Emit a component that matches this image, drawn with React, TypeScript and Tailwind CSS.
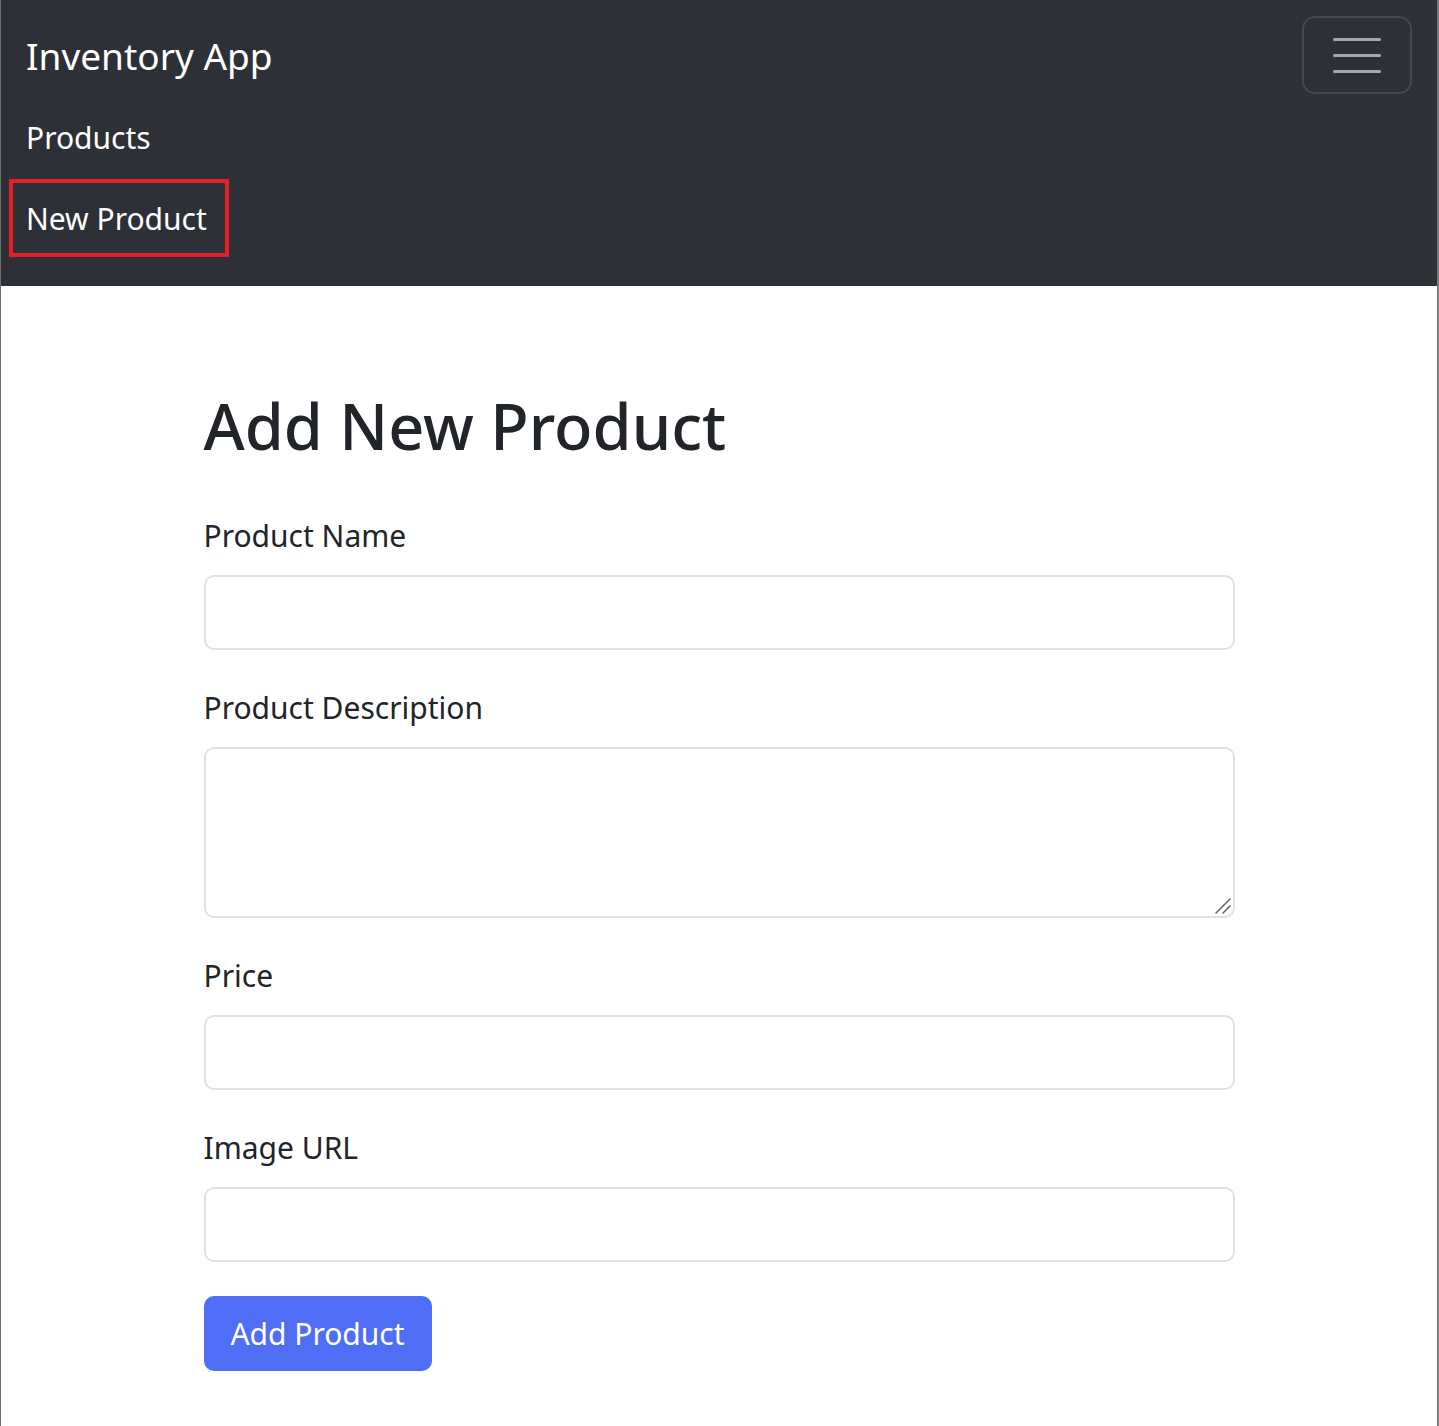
import React from "react";

const fields = [
  { id: "name", label: "Product Name", kind: "input" },
  { id: "description", label: "Product Description", kind: "textarea" },
  { id: "price", label: "Price", kind: "input" },
  { id: "image", label: "Image URL", kind: "input" },
];

function Navbar() {
  return (
    <nav className="bg-[#2d3036] px-[25px] pt-[16px] pb-[29px]">
      <div className="flex h-[78px] items-center justify-between">
        <a href="#" className="text-[37px] leading-none text-white">
          Inventory App
        </a>
        <button
          type="button"
          aria-label="Toggle navigation"
          className="flex h-[78px] w-[110px] flex-col items-center justify-center gap-[13px] rounded-[13px] border-2 border-[#45484d]"
        >
          <span className="block h-[3px] w-[48px] rounded-full bg-[#a6a7a9]" />
          <span className="block h-[3px] w-[48px] rounded-full bg-[#a6a7a9]" />
          <span className="block h-[3px] w-[48px] rounded-full bg-[#a6a7a9]" />
        </button>
      </div>
      <ul className="mt-[3px]">
        <li className="flex h-[80px] items-center">
          <a href="#" className="text-[30px] text-white">
            Products
          </a>
        </li>
        <li className="flex h-[80px] items-center">
          <a
            href="#"
            className="-ml-[17px] mt-[2px] flex h-[78px] w-[220px] items-center border-4 border-[#ec1c24] pl-[13px] text-[30px] text-white"
          >
            New Product
          </a>
        </li>
      </ul>
    </nav>
  );
}

function ResizeGrip() {
  return (
    <svg
      className="pointer-events-none absolute right-[3px] bottom-[3px]"
      width="18"
      height="18"
      viewBox="0 0 18 18"
      fill="none"
      stroke="#5f5f5f"
      strokeWidth="1.5"
      strokeLinecap="round"
    >
      <path d="M2 16 L16 2" />
      <path d="M9 16 L16 9" />
    </svg>
  );
}

export default function App() {
  return (
    <div className="min-h-[1426px] border-l border-r-2 border-l-[#6e6e6e] border-r-[#7c7c7c] bg-white font-['Noto_Sans',sans-serif] text-[#212529]">
      <Navbar />
      <main className="mx-auto w-[1031px] pt-[98px]">
        <h1 className="text-[63px] leading-[84px] font-medium">Add New Product</h1>
        <form className="mt-[47px]" onSubmit={(e) => e.preventDefault()}>
          {fields.map((field) => (
            <div key={field.id} className="mb-[37px]">
              <label htmlFor={field.id} className="mb-[18px] block text-[30px] leading-[42px]">
                {field.label}
              </label>
              {field.kind === "textarea" ? (
                <div className="relative">
                  <textarea
                    id={field.id}
                    className="block h-[171px] w-full resize-none rounded-[10px] border-2 border-[#dee2e6] px-[18px] py-[10px] text-[30px] outline-none"
                  />
                  <ResizeGrip />
                </div>
              ) : (
                <input
                  id={field.id}
                  type="text"
                  className="block h-[75px] w-full rounded-[10px] border-2 border-[#dee2e6] px-[18px] text-[30px] outline-none"
                />
              )}
            </div>
          ))}
          <button
            type="submit"
            className="-mt-[3px] h-[75px] w-[228px] rounded-[10px] bg-[#4f6ef5] text-[30px] text-white"
          >
            Add Product
          </button>
        </form>
      </main>
    </div>
  );
}
